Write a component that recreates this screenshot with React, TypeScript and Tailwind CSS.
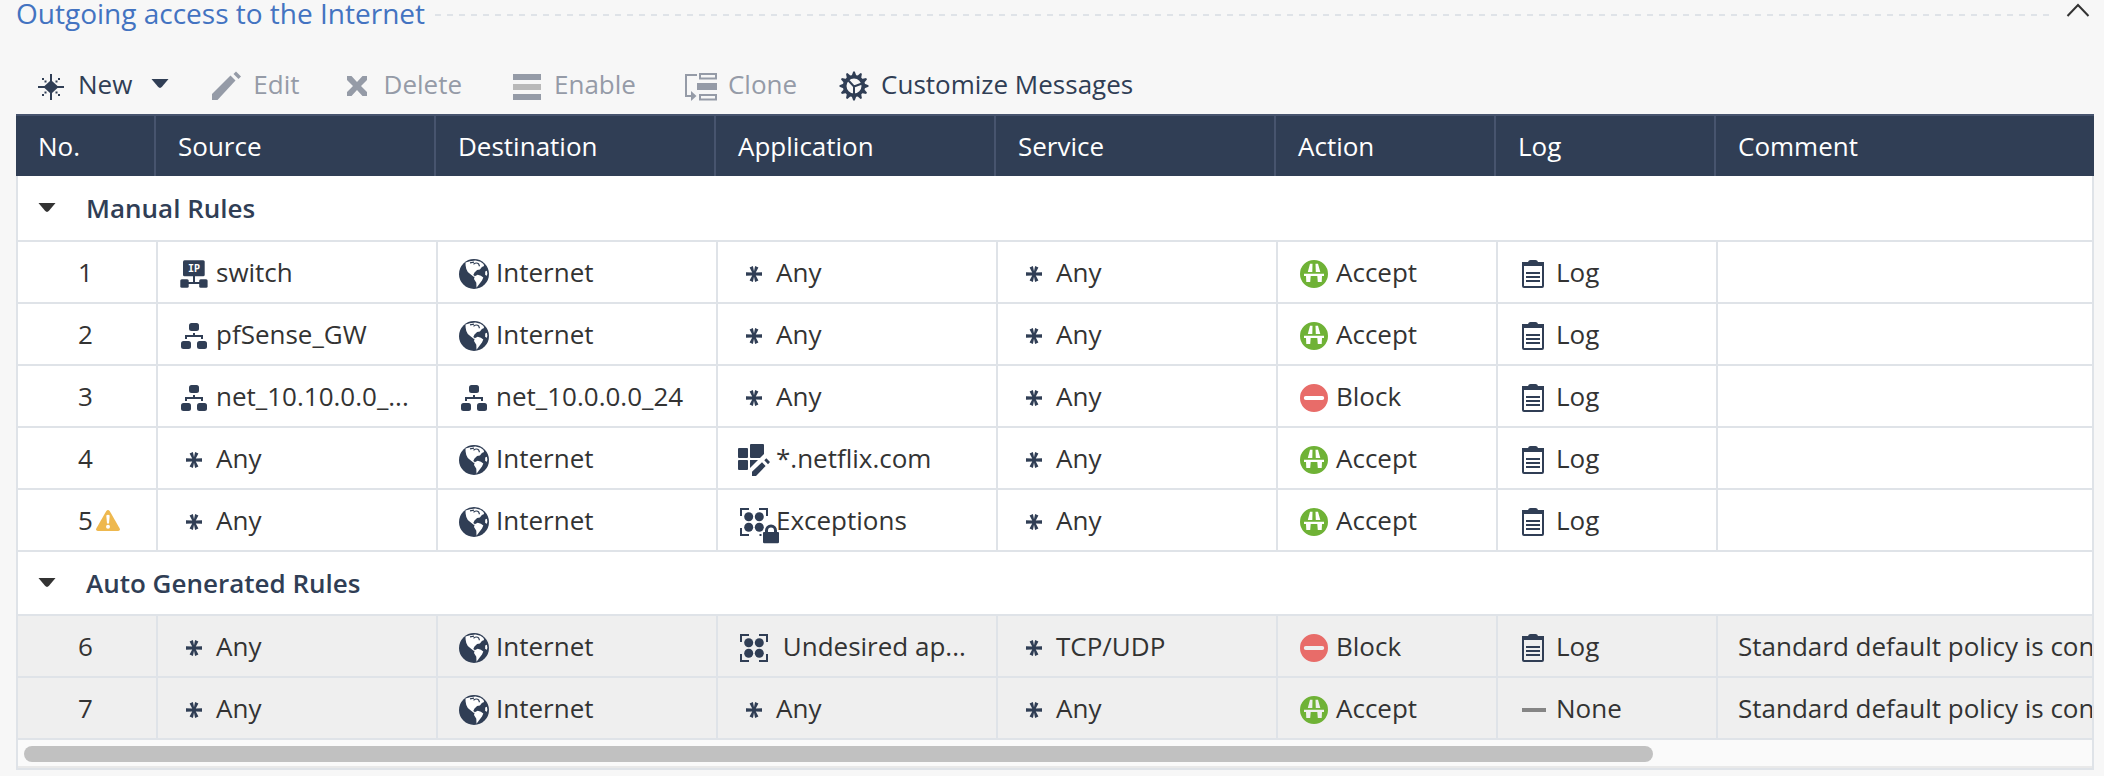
import type { ReactNode } from "react";

function Icon({ children }: { children: ReactNode }) {
  return (
    <svg viewBox="0 0 32 32" className="size-8 shrink-0 overflow-visible" fill="currentColor" aria-hidden="true">
      {children}
    </svg>
  );
}

function Caret() {
  return (
    <svg viewBox="0 0 18 10" className="h-2.5 w-[18px] shrink-0" fill="currentColor" aria-hidden="true">
      <path d="M0.5 0h17L11 7.8q-2 2.2-4 0z" />
    </svg>
  );
}

const NewIcon = () => (
  <Icon>
    <path d="M15 4h2v7l5.500 5H29v2h-6.500L17 23v7h-2v-7l-5.500-5H3v-2h6.500L15 11z" />
    <path d="M7 8h2v2H7zM9.500 10.500h2v2h-2zM23 8h2v2h-2zM20.500 10.500h2v2h-2zM7 24h2v2H7zM9.500 21.500h2v2h-2zM23 24h2v2h-2zM20.500 21.500h2v2h-2z" />
  </Icon>
);
const EditIcon = () => (
  <Icon>
    <path d="M2 30v-6L20.500 5.500l5 5L7.500 30z" />
    <path d="M23.500 4L26 1.500l5 5-2.500 2.500z" />
  </Icon>
);
const DeleteIcon = () => (
  <Icon>
    <path d="M6 6h4.500l5.500 6 5.500-6H26v4l-6 6 6 6v4h-4.500L16 20l-5.500 6H6v-4l6-6-6-6z" />
  </Icon>
);
const EnableIcon = () => (
  <Icon>
    <path d="M2 4h28v6H2zM2 24h28v6H2z" />
    <path d="M2 14h28v6H2z" fill="#b9b9b9" />
  </Icon>
);
const CloneIcon = () => (
  <Icon>
    <path d="M12 5H1v21h6" fill="none" stroke="currentColor" strokeWidth="2" />
    <path d="M6 21l5.500 5L6 31z" />
    <path d="M15 4h16v4.500H15zM15 25h16v4.500H15z" fill="none" stroke="currentColor" strokeWidth="2" />
    <path d="M12 13h20v7H12z" />
  </Icon>
);
const teeth = [0, 30, 60, 90, 120, 150, 180, 210, 240, 270, 300, 330];
const GearIcon = () => (
  <Icon>
    <circle cx="16" cy="16" r="9.300" fill="none" stroke="currentColor" strokeWidth="3.600" />
    {teeth.map((a) => (
      <path key={a} d="M13.600 6L15.200 1.500h1.600L18.400 6z" transform={`rotate(${a} 16 16)`} />
    ))}
    <path d="M16 16.500v8M16 16.500L10 10M16 16.500l8-3" stroke="currentColor" strokeWidth="2" fill="none" />
  </Icon>
);
const SwitchIcon = () => (
  <Icon>
    <rect x="5" y="2.300" width="21.700" height="16" rx="1.500" />
    <text x="15.900" y="14" textAnchor="middle" fill="#fff" fontSize="10" fontWeight="700" fontFamily="'DejaVu Sans Mono', monospace">
      IP
    </text>
    <path d="M15 18h2v6h6v2H9v-2h6z" />
    <rect x="2.300" y="21.300" width="8.400" height="8.400" rx="1.500" />
    <rect x="21.200" y="21.300" width="8.400" height="8.400" rx="1.500" />
  </Icon>
);
const NetworkIcon = () => (
  <Icon>
    <rect x="11" y="3" width="10" height="8" rx="2.500" />
    <path d="M15 13h2v2h8v4h-2v-2H9v2H7v-4h8z" />
    <rect x="3" y="21" width="10" height="8" rx="2.500" />
    <rect x="19" y="21" width="10" height="8" rx="2.500" />
  </Icon>
);
const GlobeIcon = () => (
  <Icon>
    <circle cx="16" cy="16" r="15" />
    <g fill="#fff">
      <path d="M7.500 4.600L12 3.200l5.500-.8 5 1.300 3 2.200.6 2.200-2.200.9-2 2.400-2.800.7-2.600 2.400-1.200 2.400 2 1.600-1.300.6-3.200-2.600-3-2.600L8.300 11 7.600 7.600z" />
      <path d="M16.700 18.200l3-1.400 3.200 1 2.400 1.600-1.300 3.200-2.500 3.200-3 3.900-.2-5-2.300-3.600z" />
      <path d="M27.200 13.600l1.700-.9.500 3.400-.9 2-1.300-1.600z" />
    </g>
    <path d="M15.500 6.200q3-2.300 5.200-.2l.8 2.300M12 4.800l4-.6" fill="none" stroke="currentColor" strokeWidth="1.200" />
  </Icon>
);
const AnyIcon = () => (
  <Icon>
    <path d="M8 14.300l6.200.3-2.600-5.200 3.300-1.500L16 13.200l1.100-5.300 3.300 1.500L17.800 14.600l6.200-.3v3.400l-6.200-.3 2.600 5.200-3.300 1.500L16 18.800l-1.100 5.300-3.300-1.500 2.600-5.200-6.200.3z" />
  </Icon>
);
const AcceptIcon = () => (
  <span className="text-[#6fb236]">
    <Icon>
      <path
        fillRule="evenodd"
        d="M16 2a14 14 0 1 1 0 28a14 14 0 1 1 0-28zM12 5.800L9.800 14h4.500L14.500 5.800zM17.500 5.800L17.800 14h4.500L20 5.800zM6 15.800v2.200h2l.3 6h3.900l.5-6h6.600l.5 6h3.900l.3-6h2v-2.200z"
      />
    </Icon>
  </span>
);
const BlockIcon = () => (
  <span className="text-[#e86c69]">
    <Icon>
      <path
        fillRule="evenodd"
        d="M16 2a14 14 0 1 1 0 28a14 14 0 1 1 0-28zM7.800 14a2 2 0 0 0 0 4h16.400a2 2 0 0 0 0-4z"
      />
    </Icon>
  </span>
);
const LogIcon = () => (
  <Icon>
    <path
      fillRule="evenodd"
      d="M4 4h6q.5-2 2.500-2h5q2 0 2.500 2h6v24q0 2-2 2H6q-2 0-2-2zM6 8v20h18V8z"
    />
    <path d="M8 14h14v2H8zM8 18h14v2H8zM8 22h14v2H8z" />
  </Icon>
);
const NoneIcon = () => (
  <span className="text-[#858585]">
    <Icon>
      <path d="M4 14h24v4H4z" />
    </Icon>
  </span>
);
const CustomAppIcon = () => (
  <Icon>
    <rect x="0" y="4" width="10" height="10" rx="1" />
    <rect x="0" y="16" width="10" height="10" rx="1" />
    <path d="M13 0h12q1 0 1 1v9l-4 4h-9q-1 0-1-1V1q0-1 1-1zM12 16h8l-8 8z" />
    <path d="M14 32v-4.200L24 18.300l3.600 3.700L18 32zM26.300 16.300l2-2L32 18l-2 2.200z" />
  </Icon>
);
const AppGroupShape = () => (
  <>
    <circle cx="10.700" cy="10.700" r="4.500" />
    <circle cx="21.300" cy="10.700" r="4.500" />
    <circle cx="10.700" cy="21.300" r="4.500" />
    <circle cx="21.300" cy="21.300" r="4.500" />
    <path d="M2 2h9v2H4v6H2zM21 2h9v8h-2V4h-7zM2 22h2v6h7v2H2z" />
  </>
);
const AppGroupIcon = () => (
  <Icon>
    <AppGroupShape />
    <path d="M28 22h2v8h-9v-2h7z" />
  </Icon>
);
const LockedGroupIcon = () => (
  <Icon>
    <AppGroupShape />
    <path d="M21.500 28h2v2h-2z" />
    <path
      fillRule="evenodd"
      d="M27 26v-1.500a6 6 0 0 1 12 0V26h1q1 0 1 1v9q0 1.300-1.300 1.300H26.300q-1.300 0-1.300-1.300v-9q0-1 1-1zM30 26h6v-1.500a3 3 0 0 0-6 0z"
    />
  </Icon>
);
const WarningIcon = () => (
  <svg viewBox="0 0 24 21" className="h-[21px] w-6 shrink-0" role="img" aria-label="Warning">
    <path d="M10.300 1q1.700-1.800 3.400 0L23.700 18.500q.8 2.500-1.500 2.500H1.800q-2.300 0-1.500-2.500z" fill="#eeb84e" />
    <path d="M10.300 5.500q1.700-1.500 3.400 0L13 13.500h-2z" fill="#fff" />
    <circle cx="12" cy="16.800" r="2" fill="#fff" />
  </svg>
);

type Item = [ReactNode, string];
const any: Item = [<AnyIcon />, "Any"];
const internet: Item = [<GlobeIcon />, "Internet"];
const accept: Item = [<AcceptIcon />, "Accept"];
const block: Item = [<BlockIcon />, "Block"];
const log: Item = [<LogIcon />, "Log"];

type Rule = { no: number; warning?: boolean; cells: Item[]; comment?: string };

const manualRules: Rule[] = [
  { no: 1, cells: [[<SwitchIcon />, "switch"], internet, any, any, accept, log] },
  { no: 2, cells: [[<NetworkIcon />, "pfSense_GW"], internet, any, any, accept, log] },
  { no: 3, cells: [[<NetworkIcon />, "net_10.10.0.0_..."], [<NetworkIcon />, "net_10.0.0.0_24"], any, any, block, log] },
  { no: 4, cells: [any, internet, [<CustomAppIcon />, "*.netflix.com"], any, accept, log] },
  { no: 5, warning: true, cells: [any, internet, [<LockedGroupIcon />, "Exceptions"], any, accept, log] },
];

const autoRules: Rule[] = [
  {
    no: 6,
    cells: [any, internet, [<AppGroupIcon />, " Undesired ap..."], [<AnyIcon />, "TCP/UDP"], block, log],
    comment: "Standard default policy is con",
  },
  { no: 7, cells: [any, internet, any, any, accept, [<NoneIcon />, "None"]], comment: "Standard default policy is con" },
];

function RuleRow({ rule, auto }: { rule: Rule; auto?: boolean }) {
  return (
    <tr className={auto ? "h-[62px] bg-[#efefef]" : "h-[62px] bg-white"}>
      <td className="border-b-2 border-l-2 border-[#dfe3e8] p-0 pl-[60px]">
        <div className="flex items-center gap-[3px]">
          {rule.no}
          {rule.warning && <WarningIcon />}
        </div>
      </td>
      {rule.cells.map(([icon, label], i) => (
        <td key={i} className="border-b-2 border-l-2 border-[#dfe3e8] p-0 pl-5">
          <div className="flex items-center gap-1.5">
            <span className="mt-1 flex text-[#303e55]">{icon}</span>
            <span className="whitespace-pre">{label}</span>
          </div>
        </td>
      ))}
      <td className="overflow-hidden border-x-2 border-b-2 border-[#dfe3e8] p-0 pl-5 whitespace-nowrap">{rule.comment}</td>
    </tr>
  );
}

function GroupRow({ label, first }: { label: string; first?: boolean }) {
  return (
    <tr className={first ? "h-[66px] bg-white" : "h-16 bg-white"}>
      <td colSpan={8} className="border-x-2 border-b-2 border-[#dfe3e8] p-0 pl-5">
        <button type="button" aria-expanded="true" className="flex items-center gap-[30px] font-semibold text-[#303e55]">
          <span className="text-[#333333]">
            <Caret />
          </span>
          {label}
        </button>
      </td>
    </tr>
  );
}

function ToolButton({ icon, label, disabled, menu, wide }: { icon: ReactNode; label: string; disabled?: boolean; menu?: boolean; wide?: boolean }) {
  return (
    <button
      type="button"
      disabled={disabled}
      className={`flex items-center gap-[11px] text-[#303e55] disabled:text-[#959ba7] ${wide ? "ml-2" : ""}`}
    >
      <span className="mt-1 flex">{icon}</span>
      {label}
      {menu && (
        <span className="ml-2">
          <Caret />
        </span>
      )}
    </button>
  );
}

const columns = ["No.", "Source", "Destination", "Application", "Service", "Action", "Log", "Comment"];

export default function App() {
  return (
    <main className="min-h-screen bg-[#f7f7f7] pr-2.5 pb-1.5 pl-4 font-['Open_Sans','Noto_Sans',sans-serif] text-[26px] leading-9 text-[#333333]">
      <header className="flex h-[26px] items-center pr-1">
        <h1 className="text-[28px] leading-[26px] text-[#4373c1]">Outgoing access to the Internet</h1>
        <div className="mt-1 ml-2.5 h-0.5 flex-1 bg-[repeating-linear-gradient(90deg,#dfe3e8_0_6px,transparent_6px_12px)]" />
        <button type="button" aria-label="Collapse section" className="ml-3">
          <svg viewBox="0 0 24 14" className="mb-1.5 h-3.5 w-6" fill="none" stroke="#333333" strokeWidth="2">
            <path d="M1.500 13L12 2l10.500 11" />
          </svg>
        </button>
      </header>

      <div role="toolbar" aria-label="Rule actions" className="mt-7 flex h-[60px] items-center gap-[41px] pl-[19px]">
        <ToolButton icon={<NewIcon />} label="New" menu />
        <ToolButton icon={<EditIcon />} label="Edit" disabled />
        <ToolButton icon={<DeleteIcon />} label="Delete" disabled />
        <ToolButton icon={<EnableIcon />} label="Enable" disabled wide />
        <ToolButton icon={<CloneIcon />} label="Clone" disabled wide />
        <ToolButton icon={<GearIcon />} label="Customize Messages" />
      </div>

      <table className="w-full table-fixed border-separate border-spacing-0">
        <colgroup>
          <col className="w-[140px]" />
          <col className="w-[280px]" />
          <col className="w-[280px]" />
          <col className="w-[280px]" />
          <col className="w-[280px]" />
          <col className="w-[220px]" />
          <col className="w-[220px]" />
          <col />
        </colgroup>
        <thead>
          <tr className="h-[62px] bg-[#303e55] text-left text-white">
            {columns.map((name) => (
              <th key={name} scope="col" className="border-t-2 border-r-2 border-[#47546e] p-0 pl-[22px] font-normal last:border-r-0">
                {name}
              </th>
            ))}
          </tr>
        </thead>
        <tbody>
          <GroupRow label="Manual Rules" first />
          {manualRules.map((rule) => (
            <RuleRow key={rule.no} rule={rule} />
          ))}
          <GroupRow label="Auto Generated Rules" />
          {autoRules.map((rule) => (
            <RuleRow key={rule.no} rule={rule} auto />
          ))}
        </tbody>
      </table>
      <div className="border-x-2 border-b-2 border-[#dfe3e8]">
        <div className="border-b-2 border-[#e9e9e9] bg-[#fafafa] px-1.5 pt-1.5 pb-1">
          <div className="h-4 w-[79%] rounded-full bg-[#c1c1c1]" />
        </div>
      </div>
    </main>
  );
}
